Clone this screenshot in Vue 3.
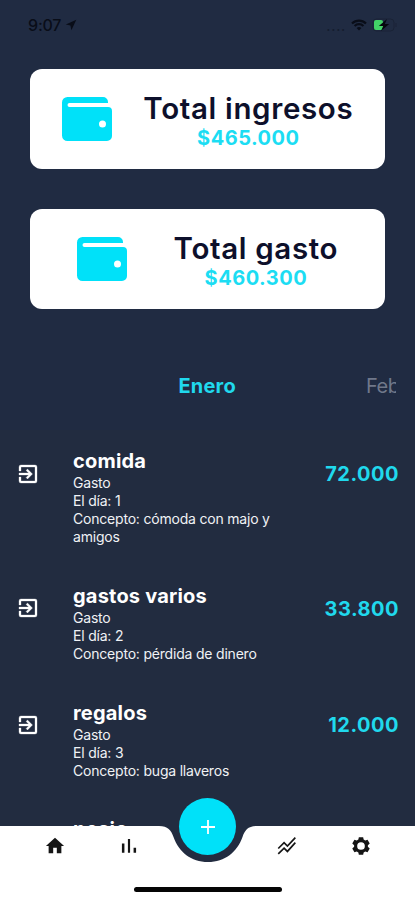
<script setup>
import { ref } from 'vue';

const totals = ref([
    { id: 1, label: 'Total ingresos', amount: '$465.000' },
    { id: 2, label: 'Total gasto', amount: '$460.300' }
]);

const movements = ref([
    { id: 1, name: 'comida', type: 'Gasto', day: 1, concept: 'cómoda con majo y amigos', amount: '72.000' },
    { id: 2, name: 'gastos varios', type: 'Gasto', day: 2, concept: 'pérdida de dinero', amount: '33.800' },
    { id: 3, name: 'regalos', type: 'Gasto', day: 3, concept: 'buga llaveros', amount: '12.000' },
    { id: 4, name: 'nosic', type: '', day: null, concept: '', amount: '' }
]);
</script>

<template>
    <div class="screen">
        <header class="status-bar">
            <div class="clock">
                <span>9:07</span>
                <svg class="location" viewBox="0 0 12 12"><path d="M11.3.7.8 5.6l4.6 1 1 4.7z" /></svg>
            </div>
            <div class="indicators">
                <span class="signal">....</span>
                <svg class="wifi" viewBox="0 0 16 12">
                    <path d="M1 4.5a10 10 0 0 1 14 0M3.6 7a6.3 6.3 0 0 1 8.8 0" />
                    <path class="wifi-dot" d="M8 11.5 5.6 9.1a3.5 3.5 0 0 1 4.8 0z" />
                </svg>
                <svg class="battery" viewBox="0 0 26 14">
                    <rect class="shell" x="1" y="1" width="21" height="12" rx="3.5" />
                    <path class="shell" d="M24 5v4" />
                    <rect class="level" x="2" y="2" width="9" height="10" rx="2" />
                    <path class="bolt" d="M15 1 6.8 8h4.4L9 13l8.2-7h-4.4z" />
                </svg>
            </div>
        </header>

        <section class="totals">
            <div v-for="total in totals" :key="total.id" class="total-card">
                <svg class="wallet" viewBox="0 0 50 44">
                    <path d="M5.500 0H41a5 5 0 0 1 5 5v1H7.500a2 2 0 0 0 0 4H46a4 4 0 0 1 4 4v25a5 5 0 0 1-5 5H5.500a5.500 5.500 0 0 1-5.500-5.500v-33A5.500 5.500 0 0 1 5.500 0zM40.500 23.500a3.500 3.500 0 1 0 0 7 3.500 3.500 0 0 0 0-7z" fill-rule="evenodd" />
                </svg>
                <div class="total-text">
                    <span class="total-label">{{ total.label }}</span>
                    <span class="total-amount">{{ total.amount }}</span>
                </div>
            </div>
        </section>

        <nav class="months">
            <span class="month active">Enero</span>
            <span class="month next">Feb</span>
        </nav>

        <ul class="movements">
            <li v-for="item in movements" :key="item.id" class="movement">
                <svg class="enter" viewBox="0 0 24 24">
                    <path d="M10.09 15.59 11.5 17l5-5-5-5-1.41 1.41L12.67 11H3v2h9.670zM19 3H5a2 2 0 0 0-2 2v4h2V5h14v14H5v-4H3v4a2 2 0 0 0 2 2h14a2 2 0 0 0 2-2V5a2 2 0 0 0-2-2z" />
                </svg>
                <div class="info">
                    <h3 class="name">{{ item.name }}</h3>
                    <template v-if="item.type">
                        <p class="detail">{{ item.type }}</p>
                        <p class="detail">El día: {{ item.day }}</p>
                        <p class="detail">Concepto: {{ item.concept }}</p>
                    </template>
                </div>
                <span class="amount">{{ item.amount }}</span>
            </li>
        </ul>

        <footer class="tab-bar">
            <svg class="tab-shape" viewBox="0 0 415 74">
                <path d="M0 0H159C168 0 171 4 173.500 11C179 26 191 36 208 36S237 26 242.500 11C245 4 248 0 257 0H415V74H0z" />
            </svg>
            <button class="add">
                <svg viewBox="0 0 24 24"><path d="M12 5v14M5 12h14" /></svg>
            </button>
            <div class="tabs">
                <svg class="tab" viewBox="1 1 22 22"><path d="M10 20v-6h4v6h5v-8h3L12 3 2 12h3v8z" /></svg>
                <svg class="tab" viewBox="0 0 24 24"><path d="M3.500 9h3v11h-3zM10.700 3.500h2.600V20h-2.600zM17.500 14h3v6h-3z" /></svg>
                <svg class="tab tab-lines" viewBox="0 0 24 24"><path d="m1.500 15 7-7 4 4L22 2M1.500 21.500l7-7 4 4L22 8" /></svg>
                <svg class="tab" viewBox="-.5 -.5 25 25">
                    <path fill-rule="evenodd" d="M9.300 1h5.400l.6 3 2 1.200 2.900-1 2.700 4.600L20.600 11v2l2.300 2.200-2.700 4.600-2.900-1-2 1.200-.6 3H9.300l-.6-3-2-1.200-2.900 1-2.700-4.600L3.400 13v-2L1.100 8.800l2.700-4.600 2.900 1 2-1.200zM12 7.200a4.800 4.800 0 1 0 0 9.600 4.800 4.800 0 0 0 0-9.600z" />
                </svg>
            </div>
            <div class="home-indicator"></div>
        </footer>
    </div>
</template>

<style>
body {
    margin: 0;
    background-color: #202b42;
}
</style>

<style scoped>
.screen {
    position: relative;
    display: flex;
    flex-direction: column;
    height: 900px;
    overflow: hidden;
    background-color: #202b42;
    color: #ffffff;
    font-family: Inter, "Liberation Sans", sans-serif;
}

.status-bar {
    display: flex;
    justify-content: space-between;
    align-items: center;
    box-sizing: border-box;
    height: 69px;
    padding: 0 17px 19px 28px;
    color: #090d18;
}

.clock {
    display: flex;
    align-items: center;
    gap: 4px;
    font-size: 16px;
    font-weight: 500;
    letter-spacing: -0.2px;
}

.location {
    width: 12px;
    height: 12px;
    fill: #090d18;
}

.indicators {
    display: flex;
    align-items: center;
    gap: 5px;
}

.signal {
    font-size: 15px;
    letter-spacing: 0.6px;
    color: #151d2e;
}

.wifi {
    width: 16px;
    height: 12px;
    fill: none;
    stroke: #090d18;
    stroke-width: 2.2;
}

.wifi-dot {
    fill: #090d18;
    stroke: none;
}

.battery {
    width: 26px;
    height: 14px;
}

.shell {
    fill: none;
    stroke: #1a2336;
}

.level {
    fill: #42d267;
}

.bolt {
    fill: #05080e;
}

.totals {
    display: flex;
    flex-direction: column;
    gap: 40px;
    padding: 0 30px;
}

.total-card {
    display: flex;
    justify-content: space-evenly;
    align-items: center;
    height: 100px;
    border-radius: 12px;
    background-color: #ffffff;
}

.wallet {
    width: 50px;
    height: 44px;
    fill: #00e1f9;
}

.total-text {
    display: flex;
    flex-direction: column;
    align-items: center;
    padding-top: 2px;
}

.total-label {
    font-size: 29.5px;
    line-height: 36px;
    font-weight: 600;
    letter-spacing: 0.65px;
    color: #0d102b;
}

.total-amount {
    font-size: 20px;
    line-height: 25px;
    font-weight: 700;
    letter-spacing: 0.5px;
    color: #1cddf3;
}

.months {
    display: grid;
    grid-template-columns: 1fr 58px 1fr;
    align-items: center;
    height: 121px;
    padding: 32px 19px 0 19px;
    box-sizing: border-box;
    font-size: 20px;
}

.month.active {
    grid-column: 2;
    font-weight: 700;
    letter-spacing: 0.2px;
    color: #20d9ed;
}

.month.next {
    justify-self: end;
    width: 30px;
    overflow: hidden;
    font-weight: 400;
    letter-spacing: -0.5px;
    color: #70788a;
}

.movements {
    flex: 1;
    min-height: 0;
    overflow: hidden;
    list-style: none;
    margin: 0;
    padding: 0;
    background-color: #222c40;
}

.movement {
    display: flex;
    align-items: flex-start;
    padding: 19px 16px 18.8px 16px;
}

.enter {
    flex: none;
    width: 24px;
    height: 24px;
    margin: 12.5px 33px 0 0;
    fill: #ffffff;
    stroke: #ffffff;
    stroke-width: 0.3;
}

.info {
    width: 212px;
}

.name {
    margin: 0;
    font-size: 20px;
    line-height: 25px;
    font-weight: 700;
    letter-spacing: 0.2px;
}

.detail {
    margin: 0;
    font-size: 14px;
    line-height: 18px;
    letter-spacing: -0.2px;
    color: #f0f2f5;
}

.amount {
    margin-left: auto;
    margin-top: 12.8px;
    font-size: 20px;
    line-height: 25px;
    font-weight: 700;
    letter-spacing: 0.5px;
    color: #20d9ed;
}

.tab-bar {
    position: absolute;
    left: 0;
    bottom: 0;
    width: 100%;
    height: 74px;
}

.tab-shape {
    position: absolute;
    inset: 0;
    width: 100%;
    height: 74px;
    fill: #ffffff;
}

.add {
    position: absolute;
    top: -28px;
    left: 179px;
    display: flex;
    justify-content: center;
    align-items: center;
    width: 57px;
    height: 57px;
    padding: 0;
    border: none;
    border-radius: 50%;
    background-color: #00e1f9;
}

.add svg {
    width: 24px;
    height: 24px;
    fill: none;
    stroke: #ffffff;
    stroke-width: 1.8;
}

.tabs {
    position: relative;
    display: grid;
    grid-template-columns: 74px 74px 1fr 74px 74px;
    justify-items: center;
    height: 60px;
    padding: 10px 17px 0 18px;
    box-sizing: border-box;
    pointer-events: none;
}

.tab {
    width: 20px;
    height: 20px;
    fill: #151515;
}

.tab:nth-child(3) {
    grid-column: 4;
}

.tab-lines {
    fill: none;
    stroke: #151515;
    stroke-width: 2;
}

.home-indicator {
    position: relative;
    width: 148px;
    height: 5px;
    margin: 1px auto 0;
    border-radius: 3px;
    background-color: #050505;
}
</style>
